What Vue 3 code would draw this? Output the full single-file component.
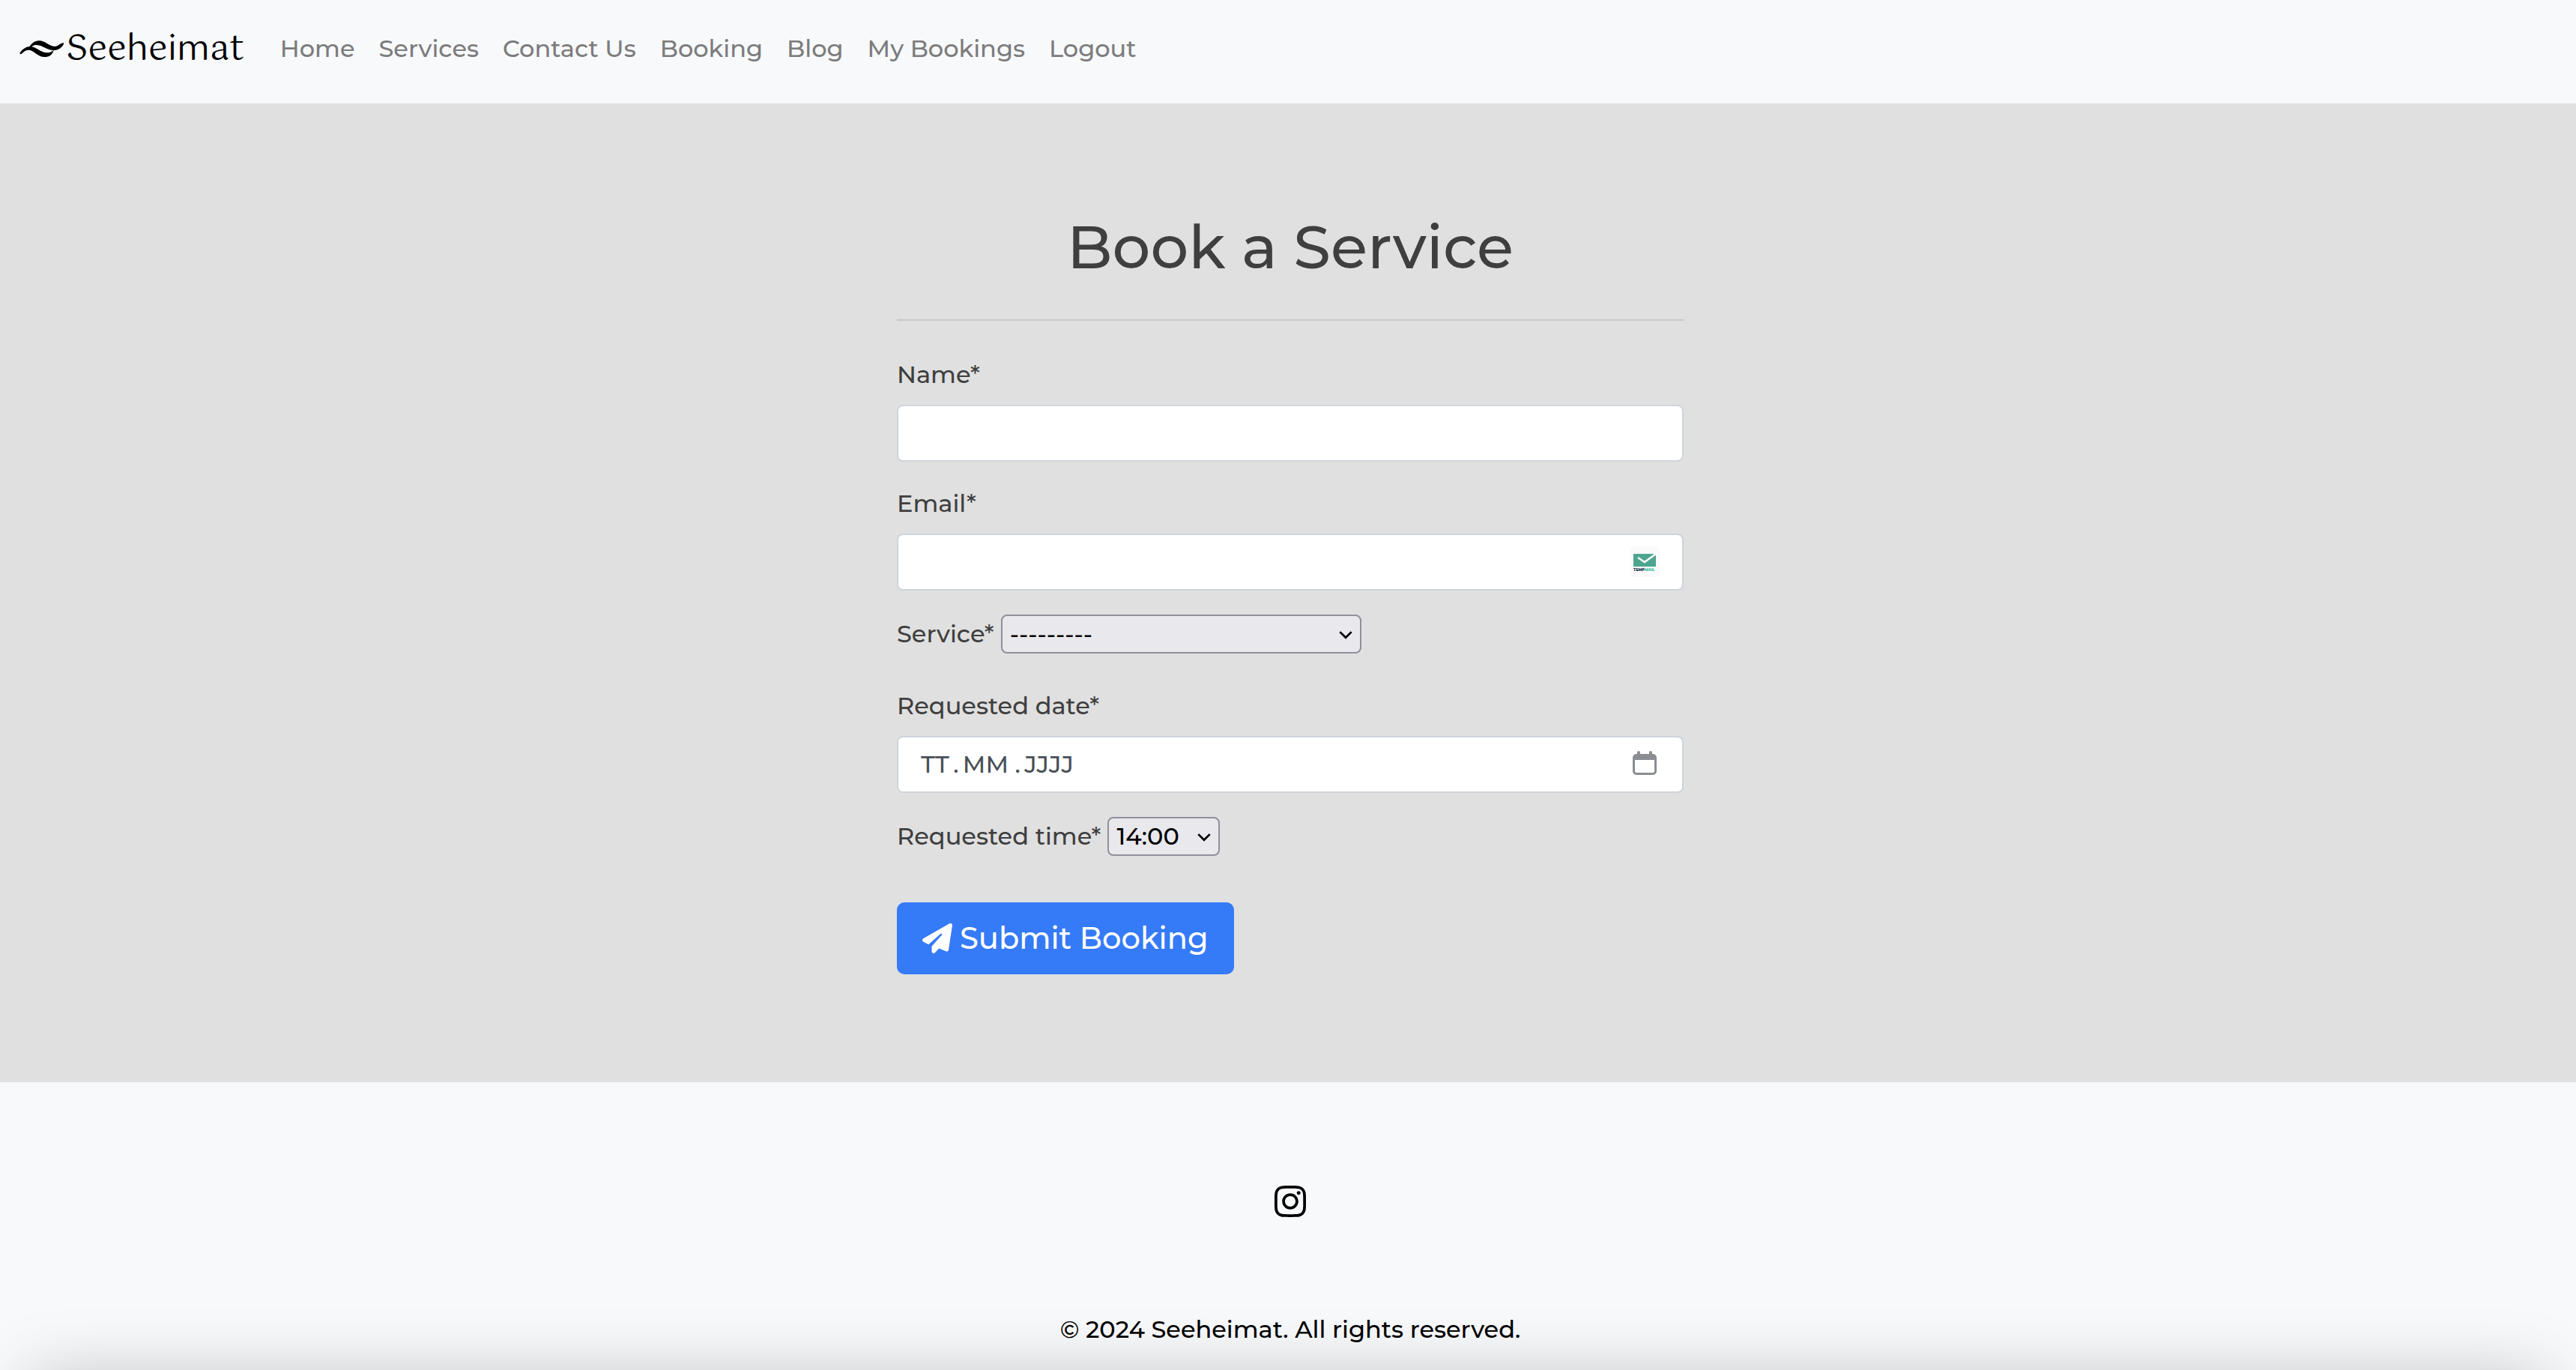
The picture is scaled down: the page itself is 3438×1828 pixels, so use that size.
<script setup>
import { ref } from 'vue'

const links = ['Home', 'Services', 'Contact Us', 'Booking', 'Blog', 'My Bookings', 'Logout']
const services = ['---------']
const times = ['14:00']

const name = ref('')
const email = ref('')
const service = ref(services[0])
const date = ref('')
const time = ref(times[0])
</script>

<template>
  <div class="page">
    <header class="navbar">
      <a class="brand" href="#">
        <svg class="brand-mark" viewBox="20 70 180 70" aria-hidden="true">
          <path d="M60 97C72 80 84 73 100 73C122 73 138 95 160 96C176 96 182 82 197 82C200 84 188 109 162 111C132 114 116 91 88 90C76 90 72 94 66 100Z" />
          <path d="M21 124C28 110 44 96 64 96C88 97 104 120 130 121C142 121 148 117 158 110C150 130 140 138 120 138C94 138 78 112 58 110C40 109 34 124 23 127Z" />
        </svg>
        <span class="brand-name">Seeheimat</span>
      </a>
      <nav class="nav">
        <a v-for="link in links" :key="link" href="#">{{ link }}</a>
      </nav>
    </header>

    <main class="main">
      <form class="form" @submit.prevent>
        <h1>Book a Service</h1>
        <hr />

        <div class="group">
          <label for="name">Name*</label>
          <div class="field"><input id="name" v-model="name" type="text" /></div>
        </div>

        <div class="group">
          <label for="email">Email*</label>
          <div class="field">
            <input id="email" v-model="email" type="email" />
            <svg class="mail-icon" viewBox="0 0 40 40" aria-hidden="true">
              <rect width="40" height="40" rx="5" fill="#fafafa" />
              <path d="M5 9H32L35 11V26H5Z" fill="#4da58f" />
              <path d="M11 14L20 20L35 9" fill="none" stroke="#fff" stroke-width="2.5" />
              <text x="5" y="32" font-size="5" font-weight="800" fill="#16304a">TEMP<tspan fill="#3fc39f">MAIL</tspan></text>
            </svg>
          </div>
        </div>

        <div class="inline-group">
          <label for="service">Service*</label>
          <div class="select select-service">
            <select id="service" v-model="service">
              <option v-for="s in services" :key="s">{{ s }}</option>
            </select>
            <svg viewBox="0 0 16 10" aria-hidden="true"><path d="M1 1L8 8L15 1" /></svg>
          </div>
        </div>

        <div class="group">
          <label for="date">Requested date*</label>
          <div class="field">
            <input id="date" v-model="date" type="text" placeholder="TT&#x2006;.&#x2006;MM .&#x2006;JJJJ" />
            <svg class="calendar-icon" viewBox="0 0 32 32" aria-hidden="true">
              <path fill-rule="evenodd" d="M6 4V2A2 2 0 0 1 10 2V4H22V2A2 2 0 0 1 26 2V4H27A5 5 0 0 1 32 9V27A5 5 0 0 1 27 32H5A5 5 0 0 1 0 27V9A5 5 0 0 1 5 4ZM3 12V27A2 2 0 0 0 5 29H27A2 2 0 0 0 29 27V12Z" />
            </svg>
          </div>
        </div>

        <div class="inline-group">
          <label for="time">Requested time*</label>
          <div class="select select-time">
            <select id="time" v-model="time">
              <option v-for="t in times" :key="t">{{ t }}</option>
            </select>
            <svg viewBox="0 0 16 10" aria-hidden="true"><path d="M1 1L8 8L15 1" /></svg>
          </div>
        </div>

        <button class="submit" type="submit">
          <svg viewBox="0 0 512 512" aria-hidden="true">
            <path d="M498.1 5.6c10.1 7 15.4 19.1 13.5 31.2l-64 416c-1.5 9.7-7.4 18.2-16 23s-18.9 5.4-28 1.6L284 427.7l-68.5 74.1c-8.9 9.7-22.9 12.9-35.2 8.1S160 493.2 160 480V396.4c0-4 1.5-7.8 4.2-10.7L331.8 202.8c5.8-6.3 5.6-16-.4-22s-15.7-6.4-22-.7L106 360.8 17.7 316.6C7.1 311.3 .3 300.7 0 288.9s5.9-22.8 16.1-28.7l448-256c10.7-6.1 23.9-5.5 34 1.4z" />
          </svg>
          <span>Submit Booking</span>
        </button>
      </form>
    </main>

    <footer class="footer">
      <a class="social" href="#" aria-label="Instagram">
        <svg viewBox="0 0 448 512" aria-hidden="true">
          <path d="M224.1 141c-63.6 0-114.9 51.3-114.9 114.9s51.3 114.9 114.9 114.9S339 319.5 339 255.9 287.7 141 224.1 141zm0 189.6c-41.1 0-74.7-33.5-74.7-74.7s33.5-74.7 74.7-74.7 74.7 33.5 74.7 74.7-33.6 74.7-74.7 74.7zm146.4-194.3c0 14.9-12 26.8-26.8 26.8-14.9 0-26.8-12-26.8-26.8s12-26.8 26.8-26.8 26.8 12 26.8 26.8zm76.1 27.2c-1.7-35.9-9.9-67.7-36.2-93.9-26.2-26.2-58-34.4-93.9-36.2-37-2.1-147.9-2.1-184.9 0-35.8 1.7-67.6 9.9-93.9 36.1s-34.4 58-36.2 93.9c-2.1 37-2.1 147.9 0 184.9 1.7 35.9 9.9 67.7 36.2 93.9s58 34.4 93.9 36.2c37 2.1 147.9 2.1 184.9 0 35.9-1.7 67.7-9.9 93.9-36.2 26.2-26.2 34.4-58 36.2-93.9 2.1-37 2.1-147.8 0-184.8zM398.8 388c-7.8 19.6-22.9 34.7-42.6 42.6-29.5 11.7-99.5 9-132.1 9s-102.7 2.6-132.1-9c-19.6-7.8-34.7-22.9-42.6-42.6-11.7-29.5-9-99.5-9-132.1s-2.6-102.7 9-132.1c7.8-19.6 22.9-34.7 42.6-42.6 29.5-11.7 99.5-9 132.1-9s102.7-2.6 132.1 9c19.6 7.8 34.7 22.9 42.6 42.6 11.7 29.5 9 99.5 9 132.1s2.7 102.7-9 132.1z" />
        </svg>
      </a>
      <p>© 2024 Seeheimat. All rights reserved.</p>
    </footer>
    <div class="bottom-shade" aria-hidden="true"></div>
  </div>
</template>

<style>
body {
  margin: 0;
  background: #f8f9fb;
}
</style>

<style scoped>
.page,
.page * {
  box-sizing: border-box;
}

.page {
  position: relative;
  min-height: 100vh;
  overflow: hidden;
  background: #f8f9fb;
  color: #3f3f3f;
  font-family: Montserrat, Inter, sans-serif;
  font-size: 32px;
  font-weight: 500;
  line-height: 48px;
}

.navbar {
  display: flex;
  align-items: center;
  height: 138px;
  padding: 0 26px 8px;
}

.brand {
  display: flex;
  align-items: center;
  gap: 2px;
  margin-right: 48px;
  color: #000;
  font-family: Gotu, "Alegreya Sans", Lato, sans-serif;
  font-size: 46px;
  font-weight: 400;
  text-decoration: none;
}

.brand-mark {
  width: 60px;
  height: 24px;
}

.brand-name {
  padding-top: 4px;
}

.nav {
  display: flex;
  gap: 32px;
}

.nav a {
  color: #7c7c7d;
  text-decoration: none;
}

.main {
  display: flex;
  justify-content: center;
  padding: 144px 0 144px 6px;
  background: #e0e0e0;
}

.form {
  width: 100%;
  max-width: 1050px;
}

h1 {
  margin: 0 0 48px;
  font-size: 80px;
  font-weight: 500;
  line-height: 96px;
  text-align: center;
}

hr {
  height: 2px;
  margin: 0 0 48px;
  border: 0;
  background: #c8c8c8;
}

.group {
  margin-bottom: 32px;
}

.group label {
  display: block;
  margin-bottom: 16px;
}

.field {
  position: relative;
}

.field input {
  display: block;
  width: 100%;
  height: 76px;
  padding: 0 30px 2px;
  border: 2px solid #ced4da;
  border-radius: 8px;
  background: #fff;
  color: #495057;
  font: inherit;
}

.field input::placeholder {
  color: #495057;
  opacity: 1;
}

.mail-icon {
  position: absolute;
  top: 18px;
  right: 32px;
  width: 40px;
  height: 40px;
}

.calendar-icon {
  position: absolute;
  top: 20px;
  right: 36px;
  width: 32px;
  height: 32px;
  overflow: visible;
  fill: #8a8d92;
}

.inline-group {
  display: flex;
  align-items: center;
  gap: 9px;
  margin-bottom: 46px;
}

.select {
  position: relative;
}

.select select {
  display: block;
  width: 100%;
  height: 52px;
  padding: 0 10px;
  border: 2px solid #8f8f9d;
  border-radius: 8px;
  background: #e9e9ed;
  color: #000;
  font: inherit;
  appearance: none;
}

.select svg {
  position: absolute;
  top: 22px;
  right: 12px;
  width: 18px;
  height: 11px;
  fill: none;
  stroke: #000;
  stroke-width: 2.5;
  pointer-events: none;
}

.select-service {
  width: 481px;
}

.select-time {
  width: 150px;
}

.submit {
  display: flex;
  align-items: center;
  gap: 10px;
  height: 96px;
  margin-top: 62px;
  padding: 0 34px;
  border: 0;
  border-radius: 10px;
  background: #357af6;
  color: #fff;
  font: inherit;
  font-size: 40px;
}

.submit svg {
  width: 40px;
  height: 40px;
  fill: currentColor;
}

.footer {
  display: flex;
  flex-direction: column;
  align-items: center;
  gap: 123px;
  padding: 135px 0 30px 6px;
  color: #000;
}

.social svg {
  display: block;
  width: 42px;
  height: 48px;
}

.footer p {
  margin: 0;
}

.bottom-shade {
  position: absolute;
  top: 100%;
  right: 40px;
  left: 40px;
  height: 200px;
  margin-top: 8px;
  box-shadow: 0 0 90px rgba(0, 0, 0, 0.22);
}
</style>
